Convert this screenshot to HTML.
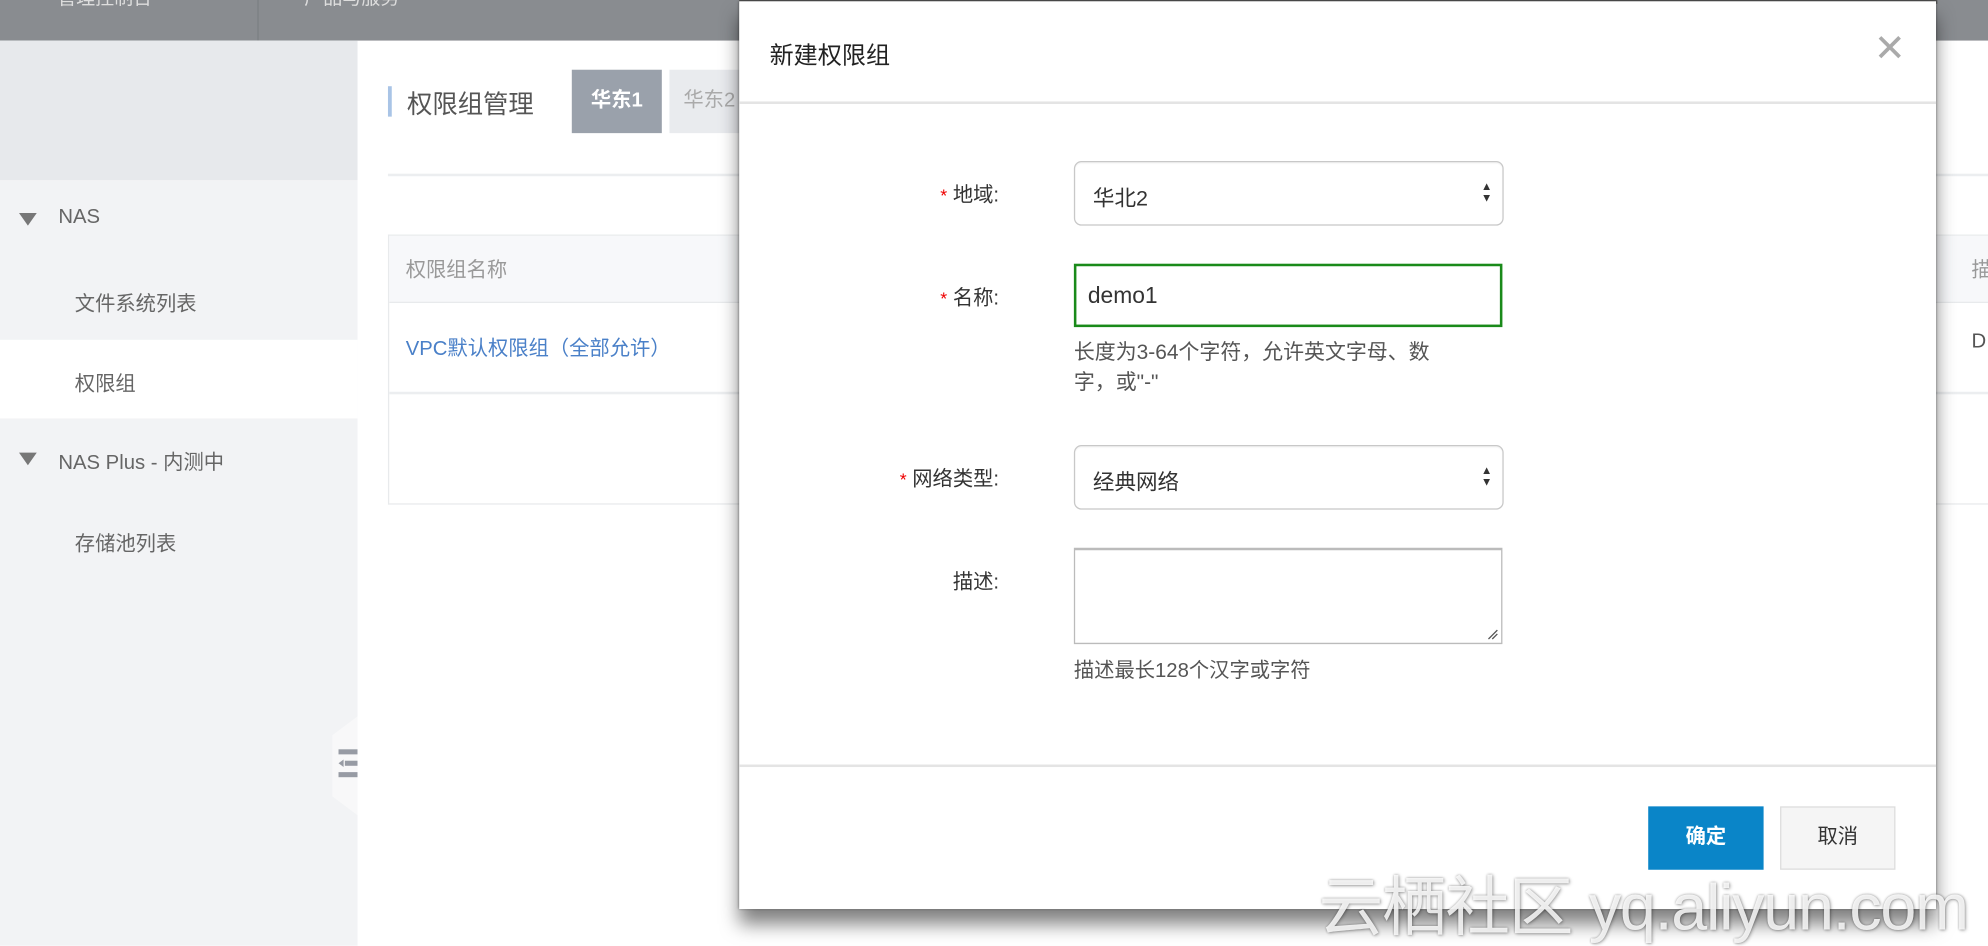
<!DOCTYPE html>
<html><head><meta charset="utf-8">
<style>
html,body{margin:0;padding:0;width:1988px;height:946px;overflow:hidden;background:#fff;}
#w{position:absolute;left:0;top:0;width:1568px;height:746px;transform:scale(1.26786);transform-origin:0 0;font-family:"Liberation Sans","Noto Sans CJK SC",sans-serif;color:#333;overflow:hidden;}
.a{position:absolute;}
.top{left:0;top:0;width:1568px;height:32px;background:#898c90;}
.side{left:0;top:32px;width:282px;height:714px;background:#f2f3f5;}
.sidetop{left:0;top:32px;width:282px;height:110px;background:#e7e9ec;}
.st{font-size:16px;color:#666;}
.tri{width:0;height:0;border-left:7px solid transparent;border-right:7px solid transparent;border-top:10px solid #777;}
.modal{left:583px;top:1px;width:944px;height:716px;background:#fff;box-shadow:0 12px 14px rgba(0,0,0,.5),0 0 2px rgba(0,0,0,.5);}
.lbl{font-size:16px;color:#333;text-align:right;width:200px;}
.req{color:#e00;font-size:14px;}
.sel{border:1px solid #c8c8c8;border-radius:6px;background:#fff;box-shadow:inset 0 1px 1px rgba(0,0,0,.05);}
.arr{position:absolute;right:8px;top:15px;font-size:9px;line-height:9px;color:#333;}
</style></head><body><div id="w">
<div class="a top"></div>
<div class="a" style="left:203px;top:0;width:1px;height:32px;background:#7c7f83"></div>
<div class="a" style="left:45px;top:-13px;font-size:15px;color:#ddd">管理控制台</div>
<div class="a" style="left:240px;top:-13px;font-size:15px;color:#ddd">产品与服务</div>
<div class="a" style="left:1315px;top:0;width:45px;height:8px;background:#b59552"></div>
<div class="a side"></div>
<div class="a sidetop"></div>
<div class="a tri" style="left:15px;top:168px"></div>
<div class="a st" style="left:46px;top:163px">NAS</div>
<div class="a st" style="left:59px;top:226px">文件系统列表</div>
<div class="a" style="left:0;top:268px;width:282px;height:62px;background:#fff"></div>
<div class="a st" style="left:59px;top:289px">权限组</div>
<div class="a tri" style="left:15px;top:357px"></div>
<div class="a st" style="left:46px;top:351px">NAS Plus - 内测中</div>
<div class="a st" style="left:59px;top:415px">存储池列表</div>
<svg class="a" style="left:262px;top:565px" width="20" height="78"><polygon points="20,0 20,78 0,63 0,15" fill="#f8f8f9"/><rect x="5" y="26" width="15" height="4" fill="#979ba4"/><rect x="10" y="35" width="10" height="4" fill="#979ba4"/><polygon points="5,37 9,34 9,40" fill="#979ba4"/><rect x="5" y="44" width="15" height="4" fill="#979ba4"/></svg>
<div class="a" style="left:306px;top:68px;width:3px;height:24px;background:#a9c4e6"></div>
<div class="a" style="left:321px;top:66px;font-size:20px;color:#555">权限组管理</div>
<div class="a" style="left:451px;top:55px;width:71px;height:50px;background:#9aa1ab;color:#fff;font-size:16px;font-weight:bold;line-height:50px;text-align:center">华东1</div>
<div class="a" style="left:528px;top:55px;width:71px;height:50px;background:#e9ebee;color:#aaa;font-size:16px;line-height:50px;padding-left:11px;box-sizing:border-box">华东2</div>
<div class="a" style="left:306px;top:137px;width:1262px;height:2px;background:#eceef0"></div>
<div class="a" style="left:306px;top:185px;width:1262px;height:213px;border:1px solid #e8eaec;border-right:0;box-sizing:border-box"></div>
<div class="a" style="left:307px;top:186px;width:1261px;height:52px;background:#f7f8fa;border-bottom:1px solid #e8eaec"></div>
<div class="a" style="left:320px;top:199px;font-size:16px;color:#999">权限组名称</div>
<div class="a" style="left:1555px;top:199px;font-size:16px;color:#999">描</div>
<div class="a" style="left:307px;top:309px;width:1261px;height:2px;background:#eceef0"></div>
<div class="a" style="left:320px;top:261px;font-size:16px;color:#4a80c8">VPC默认权限组（全部允许）</div>
<div class="a" style="left:1555px;top:261px;font-size:16px;color:#555">D</div>
<div class="a" style="left:583px;top:0;width:945px;height:3px;background:#555"></div>
<div class="a modal">
 <div class="a" style="left:24px;top:28px;font-size:19px;color:#222">新建权限组</div>
 <div class="a" style="left:895px;top:20px;font-size:30px;color:#aaa;font-weight:300">✕</div>
 <div class="a" style="left:0;top:79px;width:944px;height:2px;background:#e4e4e4"></div>
 <div class="a lbl" style="left:5px;top:139px"><span class="req">*</span> 地域:</div>
 <div class="a sel" style="left:264px;top:126px;width:337px;height:49px"><div class="a" style="left:14px;top:14px;font-size:17px">华北2</div><div class="arr">▲<br>▼</div></div>
 <div class="a lbl" style="left:5px;top:220px"><span class="req">*</span> 名称:</div>
 <div class="a" style="left:264px;top:207px;width:338px;height:50px;border:2px solid #1a8a1a;box-sizing:border-box"><div class="a" style="left:9px;top:13px;font-size:18px">demo1</div></div>
 <div class="a" style="left:264px;top:265px;width:360px;font-size:16.5px;line-height:24px;color:#555;white-space:nowrap">长度为3-64个字符，允许英文字母、数<br>字，或"-"</div>
 <div class="a lbl" style="left:5px;top:363px"><span class="req">*</span> 网络类型:</div>
 <div class="a sel" style="left:264px;top:350px;width:337px;height:49px"><div class="a" style="left:14px;top:14px;font-size:17px">经典网络</div><div class="arr">▲<br>▼</div></div>
 <div class="a lbl" style="left:5px;top:444px">描述:</div>
 <div class="a" style="left:264px;top:431px;width:338px;height:76px;border:1px solid #bbb;border-top:2px solid #bbb;box-sizing:border-box"><svg class="a" style="right:2px;bottom:2px" width="9" height="9"><path d="M1 8L8 1M4 8L8 4" stroke="#555" stroke-width="1"/></svg></div>
 <div class="a" style="left:264px;top:514px;font-size:16px;color:#555">描述最长128个汉字或字符</div>
 <div class="a" style="left:0;top:602px;width:944px;height:2px;background:#e4e4e4"></div>
 <div class="a" style="left:717px;top:635px;width:91px;height:50px;background:#0a85c8;color:#fff;font-size:16px;font-weight:bold;line-height:50px;text-align:center">确定</div>
 <div class="a" style="left:821px;top:635px;width:91px;height:50px;background:#f5f5f5;border:1px solid #ddd;box-sizing:border-box;color:#333;font-size:16px;line-height:48px;text-align:center">取消</div>
</div>
<div class="a" style="left:1040px;top:674px;font-size:51px;color:rgba(255,255,255,.85);text-shadow:0 0 2px rgba(0,0,0,.35),1px 1px 3px rgba(0,0,0,.25);white-space:nowrap;letter-spacing:-1px">云栖社区 yq.aliyun.com</div>
</div></body></html>
